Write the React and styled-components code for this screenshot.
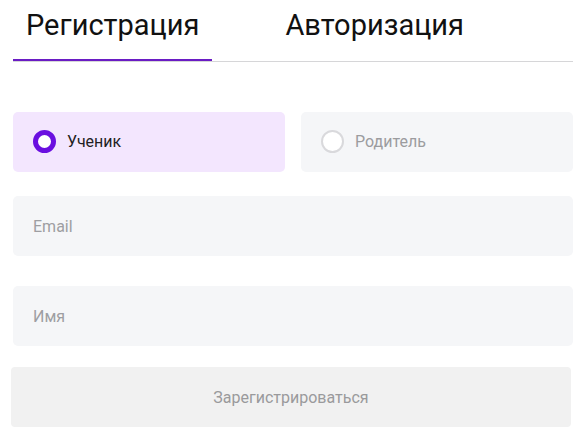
import React, { useState } from "react";
import styled, { createGlobalStyle } from "styled-components";

const Global = createGlobalStyle`
  html, body { margin: 0; padding: 0; background: #fff; }
  body { font-family: Roboto, "Noto Sans", sans-serif; }
  * { box-sizing: border-box; }
`;

const Page = styled.div`
  width: 587px;
  padding: 0 14px 0 13px;
`;

const TabBar = styled.div`
  display: flex;
  gap: 60px;
  border-bottom: 1px solid #d6d6d8;
`;

const Tab = styled.button`
  border: none;
  background: none;
  padding: 6px 13px 14px;
  margin: 0;
  font-family: Roboto, sans-serif;
  font-size: 29px;
  line-height: 39px;
  color: #111;
  cursor: pointer;
  border-bottom: 2px solid ${(p) => (p.$active ? "#6a1cc4" : "transparent")};
`;

const Form = styled.form`
  display: flex;
  flex-direction: column;
  padding-top: 50px;
`;

const RoleRow = styled.div`
  display: grid;
  grid-template-columns: 1fr 1fr;
  gap: 16px;
  margin-bottom: 24px;
`;

const RoleCard = styled.label`
  display: flex;
  align-items: center;
  gap: 11px;
  height: 60px;
  padding: 0 20px 2px;
  border-radius: 5px;
  background: ${(p) => (p.$active ? "#f3e6fe" : "#f5f6f8")};
  font-size: 16px;
  color: ${(p) => (p.$active ? "#1f1f24" : "#9c9c9f")};
  cursor: pointer;
`;

const Radio = styled.span`
  width: 23px;
  height: 23px;
  border-radius: 50%;
  background: #fff;
  border: ${(p) => (p.$active ? "5px solid #6a0fe0" : "2px solid #d9d9dc")};
  flex-shrink: 0;
`;

const Input = styled.input`
  height: 60px;
  border: none;
  border-radius: 5px;
  background: #f5f6f8;
  padding: 0 20px;
  font-family: Roboto, sans-serif;
  font-size: 16px;
  color: #222;
  outline: none;
  margin-bottom: ${(p) => p.$gap || 0}px;
  &::placeholder { color: #9e9ea2; }
`;

const Submit = styled.button`
  height: 60px;
  margin-left: -2px;
  margin-right: 2px;
  border: none;
  border-radius: 4px;
  background: #f1f1f1;
  color: #9a9a9c;
  font-family: Roboto, sans-serif;
  font-size: 16px;
`;

export default function App() {
  const [role, setRole] = useState("student");
  return (
    <Page>
      <Global />
      <TabBar>
        <Tab $active>Регистрация</Tab>
        <Tab>Авторизация</Tab>
      </TabBar>
      <Form onSubmit={(e) => e.preventDefault()}>
        <RoleRow>
          <RoleCard $active={role === "student"} onClick={() => setRole("student")}>
            <Radio $active={role === "student"} />
            Ученик
          </RoleCard>
          <RoleCard $active={role === "parent"} onClick={() => setRole("parent")}>
            <Radio $active={role === "parent"} />
            Родитель
          </RoleCard>
        </RoleRow>
        <Input placeholder="Email" $gap={30} />
        <Input placeholder="Имя" $gap={21} />
        <Submit type="submit">Зарегистрироваться</Submit>
      </Form>
    </Page>
  );
}
